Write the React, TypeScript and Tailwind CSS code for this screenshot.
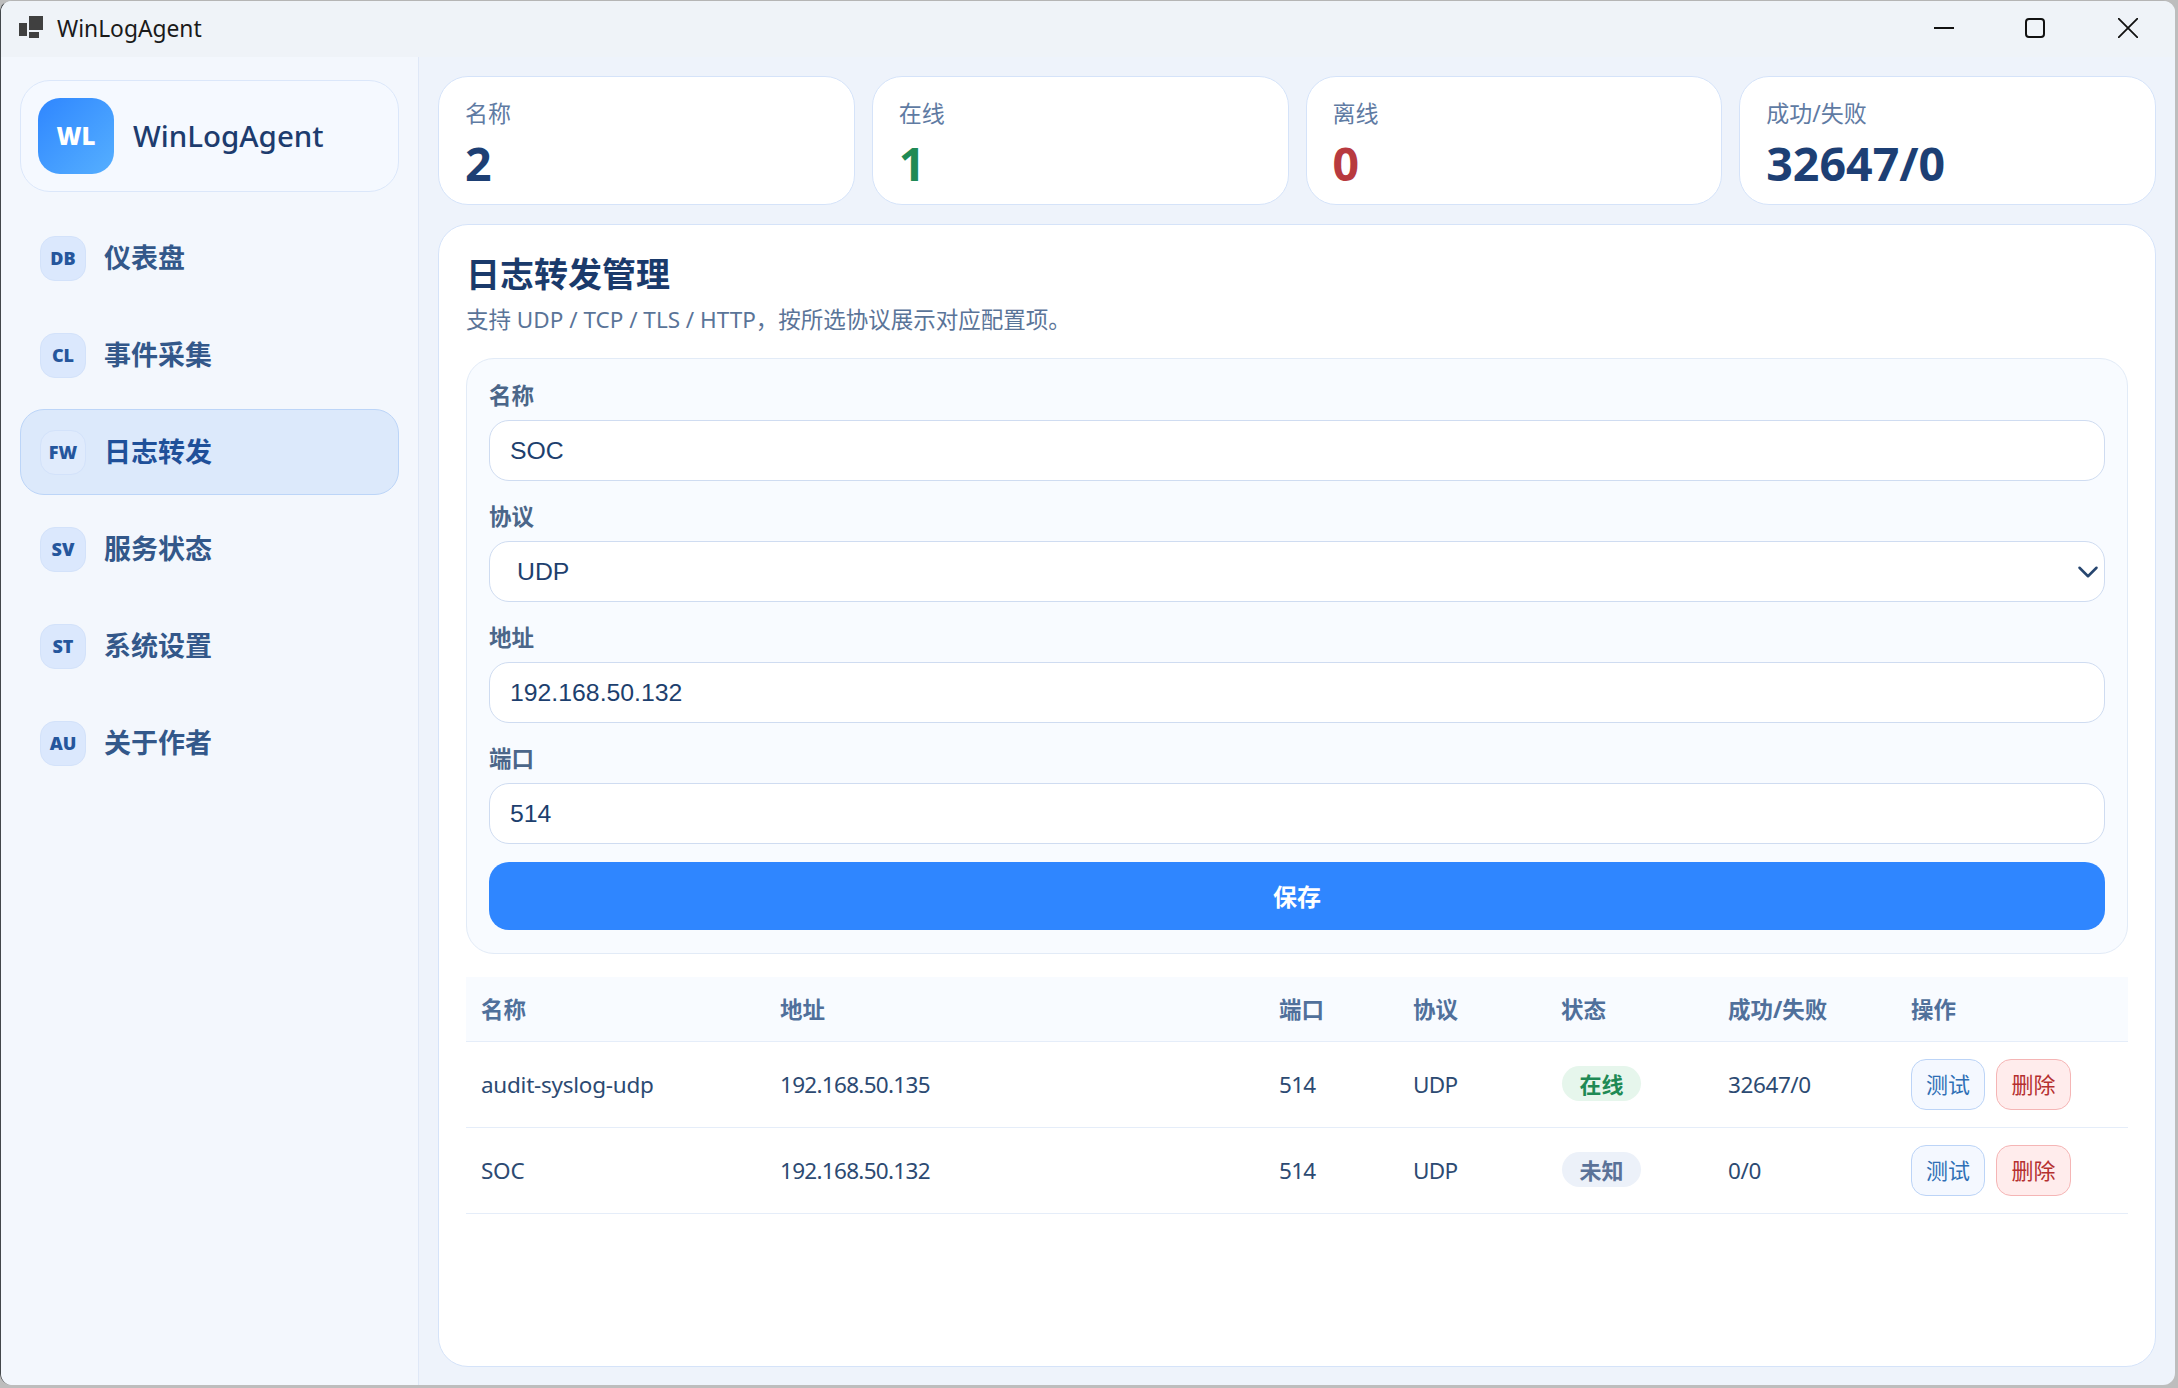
import { ChevronDown } from "lucide-react";

const cjk = "font-['Segoe_UI','Noto_Sans','Noto_Sans_CJK_SC',sans-serif]";

const navItems = [
  { code: "DB", label: "仪表盘" },
  { code: "CL", label: "事件采集" },
  { code: "FW", label: "日志转发", active: true },
  { code: "SV", label: "服务状态" },
  { code: "ST", label: "系统设置" },
  { code: "AU", label: "关于作者" },
];

const stats = [
  { label: "名称", value: "2", color: "text-[#1d3f74]" },
  { label: "在线", value: "1", color: "text-[#1f8a55]" },
  { label: "离线", value: "0", color: "text-[#b83a3f]" },
  { label: "成功/失败", value: "32647/0", color: "text-[#1d3f74]" },
];

const rows = [
  { name: "audit-syslog-udp", addr: "192.168.50.135", port: "514", proto: "UDP", status: "在线", ok: true, count: "32647/0" },
  { name: "SOC", addr: "192.168.50.132", port: "514", proto: "UDP", status: "未知", ok: false, count: "0/0" },
];

function Field({ label, value }: { label: string; value: string }) {
  return (
    <div>
      <div className="mb-[9px] h-[30px] text-[22.5px] leading-[30px] font-bold text-[#4b6689]">{label}</div>
      <input
        readOnly
        value={value}
        className="block h-[61px] w-full rounded-[20px] border border-[#cfdcf1] bg-white px-[20px] font-['Liberation_Sans',sans-serif] text-[24.8px] text-[#1d3f6e] outline-none"
      />
    </div>
  );
}

export default function App() {
  return (
    <div className={`h-[1388px] w-[2178px] overflow-hidden bg-[#bdbdbd] ${cjk}`}>
      <div className="flex h-[1385px] w-[2175px] flex-col overflow-hidden rounded-[12px] border-l border-t border-l-[#43474b] border-t-[#b5b5b5] bg-[#eef3fb]">
        {/* Title bar */}
        <div className="flex h-[56px] shrink-0 items-center bg-[#eff3f8] pl-[18px]">
          <svg className="mb-[4px]" width="24" height="22" viewBox="0 0 24 22" fill="#404040">
            <rect x="0" y="7" width="8" height="13" />
            <rect x="10" y="0" width="14" height="14" />
            <rect x="10" y="16" width="10" height="6" />
          </svg>
          <span className="ml-[14px] font-['Noto_Sans',sans-serif] text-[22.8px] text-[#1a1a1a]">WinLogAgent</span>
          <div className="mb-[2px] ml-auto flex items-center">
            <svg className="mr-[71px]" width="20" height="20" viewBox="0 0 20 20" fill="none" stroke="#111" strokeWidth="2">
              <path d="M0 10h20" />
            </svg>
            <svg className="mr-[73px]" width="20" height="20" viewBox="0 0 20 20" fill="none" stroke="#111" strokeWidth="2">
              <rect x="1" y="1" width="18" height="18" rx="3" />
            </svg>
            <svg className="mr-[37px]" width="20" height="20" viewBox="0 0 20 20" fill="none" stroke="#111" strokeWidth="1.8">
              <path d="M0 0l20 20M20 0L0 20" />
            </svg>
          </div>
        </div>

        <div className="flex min-h-0 flex-1">
          {/* Sidebar */}
          <aside className="w-[418px] shrink-0 border-r border-[#dfe8f7] bg-[#f3f7fd] pl-[19px] pr-[19px] pt-[23px]">
            <div className="flex h-[112px] items-center rounded-[30px] border border-[#dbe7fa] bg-[#f5f9ff] pl-[17px]">
              <div className="flex h-[76px] w-[76px] items-center justify-center rounded-[22px] bg-gradient-to-br from-[#2f86ff] to-[#56afff] text-[24px] font-black text-white">
                WL
              </div>
              <span className="ml-[19px] text-[29.5px] font-medium text-[#1d3c6e]">WinLogAgent</span>
            </div>
            <nav className="mt-[23px] flex flex-col gap-[11px]">
              {navItems.map((item) => (
                <div
                  key={item.code}
                  className={`flex h-[86px] items-center rounded-[24px] border pl-[19px] ${
                    item.active ? "border-[#bcd5f8] bg-[#dce9fb]" : "border-transparent"
                  }`}
                >
                  <div
                    className={`flex h-[45px] w-[46px] items-center justify-center rounded-[15px] border border-[#d3e2fa] text-[18px] font-black text-[#25569c] ${
                      item.active ? "bg-[#e0ebfc]" : "bg-[#dbe8fd]"
                    }`}
                  >
                    {item.code}
                  </div>
                  <span className={`ml-[18px] text-[27px] font-bold ${item.active ? "text-[#1f5099]" : "text-[#33588a]"}`}>
                    {item.label}
                  </span>
                </div>
              ))}
            </nav>
          </aside>

          {/* Content */}
          <main className="min-w-0 flex-1 pl-[19px] pr-[19px] pt-[19px]">
            <div className="grid grid-cols-4 gap-[17px]">
              {stats.map((s) => (
                <div key={s.label} className="h-[129px] rounded-[30px] border border-[#d5e3f9] bg-white pl-[26px] pt-[20px]">
                  <div className="text-[23px] leading-[32px] text-[#5f7ba3]">{s.label}</div>
                  <div className={`mt-[5px] text-[46.5px] leading-[58px] font-bold ${s.color}`}>{s.value}</div>
                </div>
              ))}
            </div>

            <section className="mt-[19px] h-[1143px] rounded-[30px] border border-[#d5e3f9] bg-white px-[27px] pt-[27px]">
              <h1 className="text-[34px] leading-[44px] font-bold text-[#1a3a6b]">日志转发管理</h1>
              <p className="mt-[7px] text-[22.5px] leading-[34px] text-[#5a7498]">
                支持 UDP / TCP / TLS / HTTP，按所选协议展示对应配置项。
              </p>

              <div className="mt-[21px] rounded-[28px] border border-[#e2ebf7] bg-[#f8fbff] px-[22px] pb-[23px] pt-[22px]">
                <div className="flex flex-col gap-[21px]">
                  <Field label="名称" value="SOC" />
                  <div>
                    <div className="mb-[9px] h-[30px] text-[22.5px] leading-[30px] font-bold text-[#4b6689]">协议</div>
                    <div className="flex h-[61px] items-center rounded-[20px] border border-[#cfdcf1] bg-white pl-[27px] font-['Liberation_Sans',sans-serif] text-[24.8px] text-[#1d3f6e]">
                      UDP
                      <ChevronDown className="ml-auto -mr-[1px] text-[#27466f]" size={34} strokeWidth={1.8} />
                    </div>
                  </div>
                  <Field label="地址" value="192.168.50.132" />
                  <Field label="端口" value="514" />
                </div>
                <button className="mt-[18px] flex h-[68px] w-full items-center justify-center rounded-[20px] bg-[#2f86ff] pt-[2px] text-[24px] font-bold text-white">
                  保存
                </button>
              </div>

              <table className="mt-[23px] w-full table-fixed border-collapse text-left">
                <thead>
                  <tr className="h-[64px] border-b border-[#e5edf9] bg-[#f8fbff] text-[22.5px] font-bold text-[#50709b]">
                    <th className="w-[299px] pl-[15px] pt-[2px]">名称</th>
                    <th className="w-[499px] pl-[15px] pt-[2px]">地址</th>
                    <th className="w-[134px] pl-[15px] pt-[2px]">端口</th>
                    <th className="w-[148px] pl-[15px] pt-[2px]">协议</th>
                    <th className="w-[167px] pl-[15px] pt-[2px]">状态</th>
                    <th className="w-[183px] pl-[15px] pt-[2px]">成功/失败</th>
                    <th className="pl-[15px] pt-[2px]">操作</th>
                  </tr>
                </thead>
                <tbody>
                  {rows.map((r) => (
                    <tr key={r.name} className="h-[86px] border-b border-[#e5edf9] text-[22.5px] text-[#2c4a72]">
                      <td className="pl-[15px] pt-[2px] tracking-[-0.25px]">{r.name}</td>
                      <td className="pl-[15px] pt-[2px] tracking-[-0.7px]">{r.addr}</td>
                      <td className="pl-[15px] pt-[2px] tracking-[-0.7px]">{r.port}</td>
                      <td className="pl-[15px] pt-[2px] tracking-[-0.7px]">{r.proto}</td>
                      <td className="pl-[16px]">
                        <span
                          className={`inline-flex h-[35px] w-[79px] items-center justify-center rounded-full pt-[1px] text-[22px] font-bold ${
                            r.ok ? "bg-[#e6f6ec] text-[#1f8a55]" : "bg-[#ecf1f9] text-[#5a7298]"
                          }`}
                        >
                          {r.status}
                        </span>
                      </td>
                      <td className="pl-[15px] pt-[2px] tracking-[-0.4px]">{r.count}</td>
                      <td className="pl-[15px]">
                        <div className="flex gap-[11px]">
                          <button className="h-[51px] w-[74px] rounded-[15px] border border-[#bcd4f7] bg-[#f4f8ff] text-[22px] text-[#2f6fb5]">
                            测试
                          </button>
                          <button className="h-[51px] w-[75px] rounded-[15px] border border-[#f5b5b5] bg-[#ffecec] text-[22px] text-[#b53030]">
                            删除
                          </button>
                        </div>
                      </td>
                    </tr>
                  ))}
                </tbody>
              </table>
            </section>
          </main>
        </div>
      </div>
    </div>
  );
}
